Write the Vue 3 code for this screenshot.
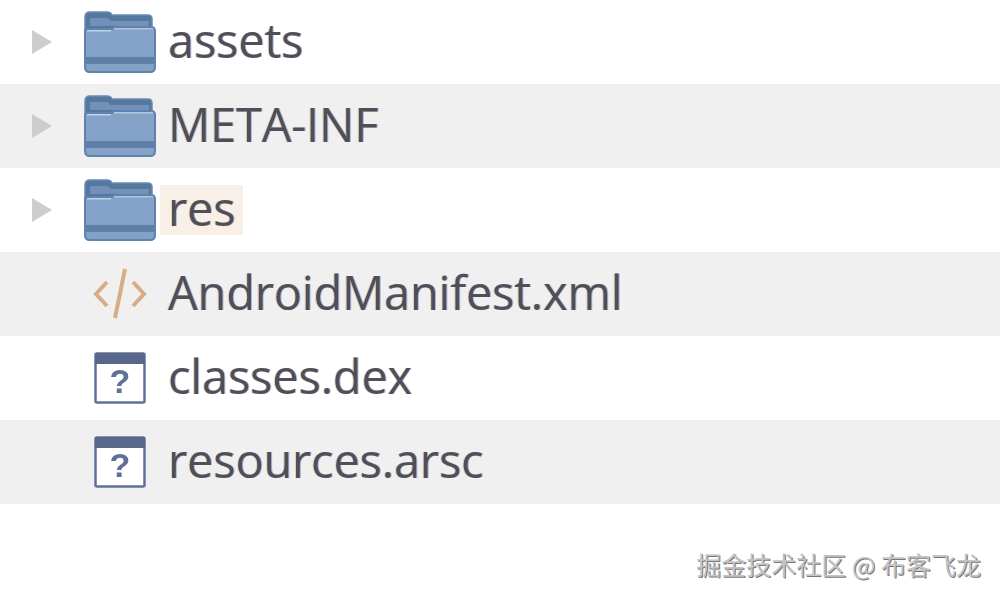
<script setup>
const files = [
  { name: 'assets', icon: 'folder', arrow: true },
  { name: 'META-INF', icon: 'folder', arrow: true },
  { name: 'res', icon: 'folder', arrow: true, selected: true },
  { name: 'AndroidManifest.xml', icon: 'xml' },
  { name: 'classes.dex', icon: 'unknown' },
  { name: 'resources.arsc', icon: 'unknown' }
];
</script>

<template>
  <div class="page">
    <div class="list">
      <div v-for="file in files" :key="file.name" class="row">
        <div class="arrow-cell">
          <span v-if="file.arrow" class="arrow"></span>
        </div>
        <div class="icon-cell">
          <svg v-if="file.icon === 'folder'" class="folder" width="72" height="62" viewBox="0 0 72 62">
            <path d="M1 6q0-5 5-5h17q4 0 5 3h36q4 0 4 4v14H1z" fill="#55789f" stroke="#6a8cb5" stroke-width="1.5" />
            <path d="M6 7h18l3 3h38v5H6z" fill="#7391b8" />
            <path d="M1 20q0-2 3-2h22q3 0 5-2h36q4 0 4 4v36q0 5-5 5H6q-5 0-5-5z" fill="#84a2c8" stroke="#5f83ae" stroke-width="2" />
            <rect x="3" y="19" width="24" height="1.5" fill="#c4d4e6" />
            <rect x="30" y="17" width="39" height="1.5" fill="#b0c5dc" />
            <rect x="2" y="46" width="68" height="7" fill="#5f7fa8" />
          </svg>
          <svg v-else-if="file.icon === 'xml'" class="code" width="54" height="54" viewBox="0 0 54 54">
            <path d="M14 15L3 27l11 12M40 15l11 12-11 12" fill="none" stroke="#d5ae85" stroke-width="4" />
            <path d="M32 2L22 51" fill="none" stroke="#d5ae85" stroke-width="4" />
          </svg>
          <svg v-else class="unknown" width="52" height="52" viewBox="0 0 52 52">
            <rect x="1.5" y="1.5" width="49" height="49" rx="1.5" fill="#fff" stroke="#5f7199" stroke-width="2.5" />
            <rect x="1" y="1" width="50" height="11" fill="#59678a" />
            <text x="26" y="41" class="mark">?</text>
          </svg>
        </div>
        <span class="name" :class="{ selected: file.selected }">{{ file.name }}</span>
      </div>
    </div>
    <div class="credit">掘金技术社区 @ 布客飞龙</div>
  </div>
</template>

<style scoped>
.page {
  width: 1000px;
  height: 597px;
  background: #fff;
  overflow: hidden;
  position: relative;
  font-family: "Open Sans", "Noto Sans", sans-serif;
}
.list {
  filter: blur(0.6px);
}
.row {
  height: 84px;
  display: flex;
  align-items: center;
}
.row:nth-child(even) {
  background: #f0f0f0;
}
.arrow-cell {
  width: 83px;
  padding-left: 32px;
  box-sizing: border-box;
}
.arrow {
  display: block;
  width: 0;
  height: 0;
  border-left: 20px solid #cdcdcd;
  border-top: 12px solid transparent;
  border-bottom: 12px solid transparent;
}
.icon-cell {
  width: 85px;
  display: flex;
  align-items: center;
  padding-left: 1px;
  box-sizing: border-box;
}
.folder {
  display: block;
}
.code {
  display: block;
  margin-left: 9px;
}
.unknown {
  display: block;
  margin-left: 10px;
}
.mark {
  font-family: "Liberation Sans", sans-serif;
  font-size: 34px;
  font-weight: 700;
  fill: #5f7199;
  text-anchor: middle;
}
.name {
  font-size: 47px;
  font-weight: 500;
  letter-spacing: -0.2px;
  line-height: 46px;
  color: #4f4f59;
  padding: 0 2px 4px 0;
  text-shadow: -1px 0 0 rgba(225, 170, 120, 0.5), 1px 0 0 rgba(90, 130, 190, 0.5);
}
.selected {
  background: #f8efe6;
  margin-left: -8px;
  padding: 0 8px 4px;
}
.credit {
  position: absolute;
  right: 19px;
  top: 549px;
  font-family: "Noto Sans CJK SC", sans-serif;
  font-size: 25px;
  line-height: 30px;
  color: #c4c4c4;
  text-shadow: 1px 1px 0 #777;
}
</style>
